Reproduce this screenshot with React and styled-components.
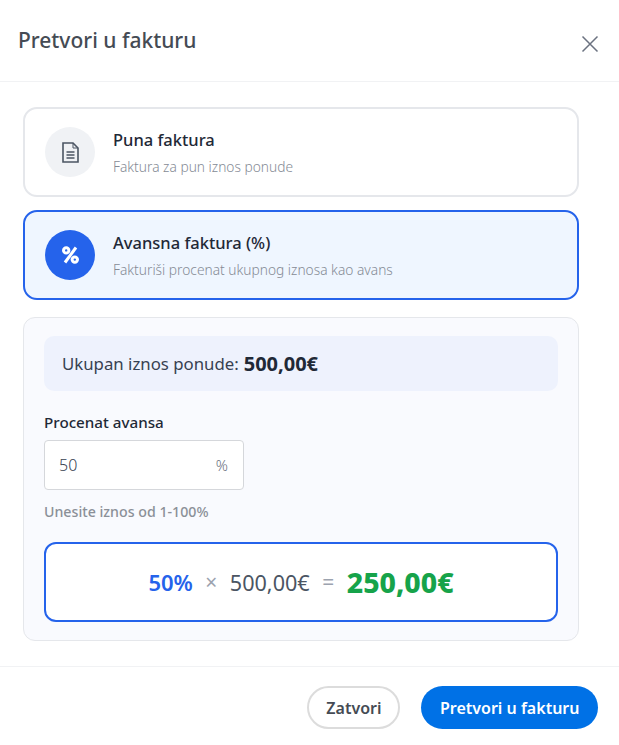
import React from "react";
import styled, { createGlobalStyle } from "styled-components";

const GlobalStyle = createGlobalStyle`
  html, body { margin: 0; padding: 0; background: #fff; }
  body { font-family: "Noto Sans", "Open Sans", sans-serif; color: #1f2937; }
  * { box-sizing: border-box; }
`;

const Modal = styled.div`
  width: 619px;
  height: 745px;
  display: flex;
  flex-direction: column;
  background: #fff;
`;

const Header = styled.header`
  height: 82px;
  flex: none;
  display: flex;
  justify-content: space-between;
  padding: 25px 20px 0 18px;
  border-bottom: 1px solid #f1f2f4;
`;

const Title = styled.h2`
  margin: 0;
  font-size: 21px;
  line-height: 30px;
  font-weight: 500;
  color: #454b54;
`;

const CloseButton = styled.button`
  width: 18px;
  height: 18px;
  margin-top: 10px;
  padding: 0;
  border: 0;
  background: none;
  color: #6b7280;
  display: flex;
`;

const Body = styled.main`
  flex: 1;
  display: flex;
  flex-direction: column;
  padding: 25px 40px 0 23px;
`;

const OptionCard = styled.div`
  height: 90px;
  display: flex;
  align-items: center;
  gap: 18px;
  padding: 0 20px;
  margin-bottom: ${(p) => (p.$active ? "17px" : "13px")};
  border: 2px solid ${(p) => (p.$active ? "#2563eb" : "#e5e7eb")};
  border-radius: 14px;
  background: ${(p) => (p.$active ? "#eff6ff" : "#fff")};
`;

const IconCircle = styled.div`
  width: 50px;
  height: 50px;
  flex: none;
  border-radius: 50%;
  display: flex;
  align-items: center;
  justify-content: center;
  background: ${(p) => (p.$active ? "#2563eb" : "#f0f2f5")};
  color: ${(p) => (p.$active ? "#fff" : "#4b5563")};
`;

const OptionTitle = styled.div`
  font-size: 16.5px;
  line-height: 24px;
  font-weight: 500;
  color: #1f2937;
`;

const OptionDesc = styled.div`
  margin-top: 5px;
  font-size: 13.75px;
  line-height: 20px;
  font-weight: 300;
  color: #858b95;
`;

const Panel = styled.section`
  height: 324px;
  padding: 18px 20px;
  border: 1px solid #e5e7eb;
  border-radius: 12px;
  background: #f9fafe;
`;

const TotalBar = styled.div`
  height: 55px;
  display: flex;
  align-items: center;
  gap: 5px;
  padding: 0 18px;
  border-radius: 10px;
  background: #eef2fd;
  font-size: 16.8px;
  color: #374151;
  strong { font-size: 20px; font-weight: 700; color: #1f2937; }
`;

const FieldLabel = styled.label`
  display: block;
  margin-top: 20px;
  font-size: 15.2px;
  line-height: 22px;
  font-weight: 500;
  color: #1f2937;
`;

const InputBox = styled.div`
  width: 200px;
  height: 50px;
  margin-top: 7px;
  display: flex;
  align-items: center;
  justify-content: space-between;
  padding: 0 15px 0 14px;
  border: 1px solid #d5d7db;
  border-radius: 4px;
  background: #fff;
  font-size: 16px;
  font-weight: 300;
  color: #374151;
`;

const Unit = styled.span`
  font-size: 15px;
  color: #6b7280;
`;

const Hint = styled.div`
  margin-top: 12px;
  font-size: 14.2px;
  line-height: 20px;
  font-weight: 500;
  color: #8b9098;
`;

const ResultBox = styled.div`
  height: 80px;
  margin-top: 20px;
  display: flex;
  align-items: center;
  justify-content: center;
  gap: 12.5px;
  border: 2px solid #2563eb;
  border-radius: 12px;
  background: #fff;
`;

const Percent = styled.span`
  font-size: 22px;
  font-weight: 600;
  color: #2563eb;
`;

const Operator = styled.span`
  font-size: 21px;
  color: #9ca3af;
`;

const Amount = styled.span`
  font-size: 21.6px;
  color: #4b5563;
`;

const ResultValue = styled.span`
  font-size: 28.4px;
  font-weight: 800;
  color: #16a34a;
`;

const Footer = styled.footer`
  height: 79px;
  flex: none;
  display: flex;
  justify-content: flex-end;
  align-items: flex-start;
  gap: 21px;
  padding: 19px 21px 0 0;
  border-top: 1px solid #f1f2f4;
`;

const Button = styled.button`
  height: 43px;
  padding: 0 ${(p) => (p.$primary ? "18.5px" : "17px")};
  border: ${(p) => (p.$primary ? "0" : "2px solid #dcdcdc")};
  border-radius: 22px;
  background: ${(p) => (p.$primary ? "#0071e6" : "#fff")};
  color: ${(p) => (p.$primary ? "#fff" : "#454b54")};
  font-family: inherit;
  font-size: 16px;
  font-weight: 600;
`;

const CloseIcon = () => (
  <svg width="18" height="18" viewBox="0 0 18 18" fill="none" stroke="currentColor" strokeWidth="1.5">
    <path d="M1.5 1.5 L16.5 16.5 M16.5 1.5 L1.5 16.5" />
  </svg>
);

const FileIcon = () => (
  <svg width="17" height="21" viewBox="0 0 17 21" fill="none" stroke="currentColor" strokeWidth="1.6">
    <path d="M1 1h10l5 5v14H1z" />
    <path d="M11 1v5h5" strokeWidth="1" />
    <path d="M4.5 10h8M4.5 13h8M4.5 16h8" />
  </svg>
);

const PercentIcon = () => (
  <svg width="17" height="18" viewBox="0 0 17 18" fill="none" stroke="currentColor" strokeWidth="3">
    <circle cx="4.2" cy="4.4" r="2.7" />
    <circle cx="12.8" cy="13.6" r="2.7" />
    <path d="M14 1.5 L3 16.5" />
  </svg>
);

export default function App() {
  return (
    <Modal>
      <GlobalStyle />
      <Header>
        <Title>Pretvori u fakturu</Title>
        <CloseButton><CloseIcon /></CloseButton>
      </Header>
      <Body>
        <OptionCard>
          <IconCircle><FileIcon /></IconCircle>
          <div>
            <OptionTitle>Puna faktura</OptionTitle>
            <OptionDesc>Faktura za pun iznos ponude</OptionDesc>
          </div>
        </OptionCard>
        <OptionCard $active>
          <IconCircle $active><PercentIcon /></IconCircle>
          <div>
            <OptionTitle>Avansna faktura (%)</OptionTitle>
            <OptionDesc>Fakturiši procenat ukupnog iznosa kao avans</OptionDesc>
          </div>
        </OptionCard>
        <Panel>
          <TotalBar>Ukupan iznos ponude: <strong>500,00€</strong></TotalBar>
          <FieldLabel>Procenat avansa</FieldLabel>
          <InputBox>50<Unit>%</Unit></InputBox>
          <Hint>Unesite iznos od 1-100%</Hint>
          <ResultBox>
            <Percent>50%</Percent>
            <Operator>×</Operator>
            <Amount>500,00€</Amount>
            <Operator>=</Operator>
            <ResultValue>250,00€</ResultValue>
          </ResultBox>
        </Panel>
      </Body>
      <Footer>
        <Button>Zatvori</Button>
        <Button $primary>Pretvori u fakturu</Button>
      </Footer>
    </Modal>
  );
}
